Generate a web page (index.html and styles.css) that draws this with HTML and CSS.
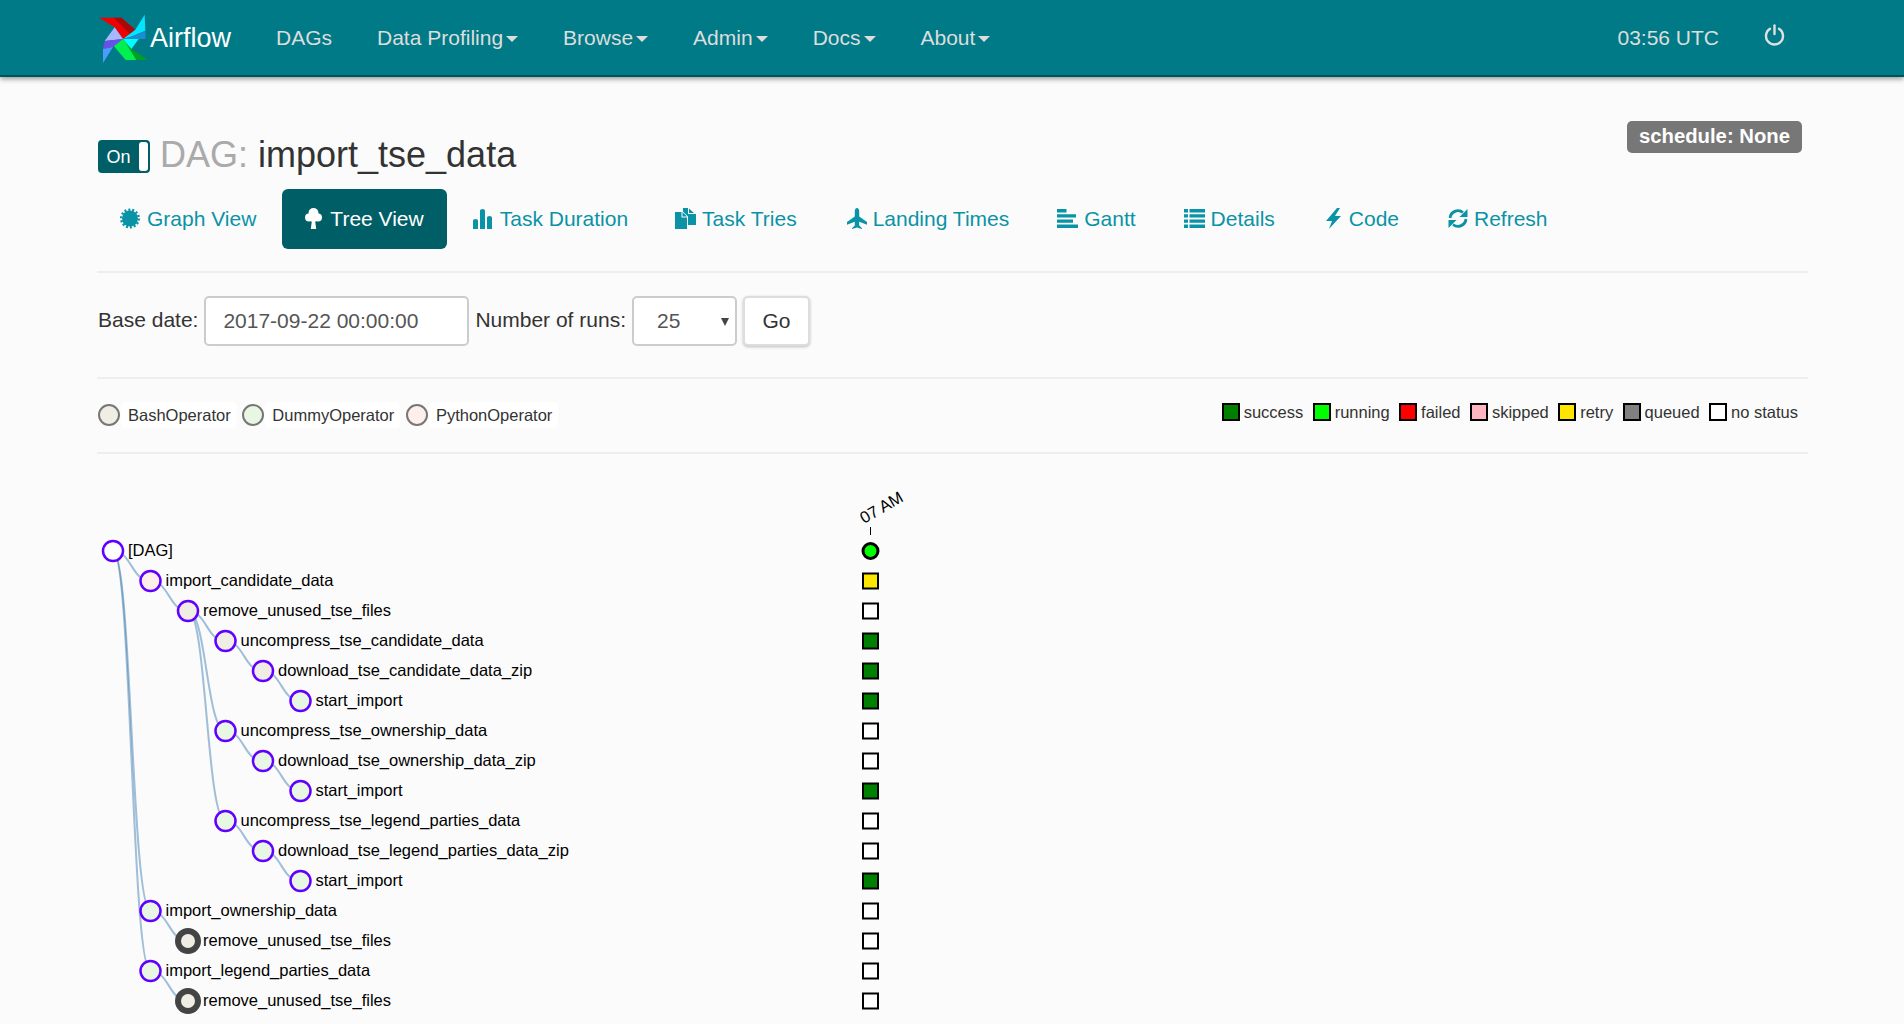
FILE: index.html
```html
<!DOCTYPE html>
<html lang="en">
<head>
<meta charset="utf-8">
<title>Airflow - import_tse_data</title>
<link rel="stylesheet" href="styles.css">
</head>
<body>
<header class="navbar">
  <a class="brand">
    <svg class="logo" viewBox="28 25 150 150" width="50" height="50">
      <polygon fill="#f00000" points="28,36 95,36 137,72 100,100 75,65"/>
      <polygon fill="#a80a0a" points="72,36 95,36 137,72 122,86"/>
      <polygon fill="#00e6ff" points="165,27 167,75 128,92 100,100 137,72"/>
      <polygon fill="#1a8fd0" points="167,75 168,100 100,100 128,92"/>
      <polygon fill="#00ffff" points="100,100 147,100 125,130"/>
      <polygon fill="#00f050" points="70,118 100,100 125,130 140,163 108,163"/>
      <polygon fill="#00a020" points="110,115 125,130 175,163 140,163"/>
      <polygon fill="#a8b8ff" points="75,65 100,100 45,106"/>
      <polygon fill="#6a50e8" points="45,106 100,100 70,124 40,130"/>
      <polygon fill="#4d9bff" points="40,172 40,130 70,124"/>
    </svg>
    <span class="brand-name">Airflow</span>
  </a>
  <nav class="nav-main">
    <a class="nav-item">DAGs</a>
    <a class="nav-item">Data Profiling<i class="caret"></i></a>
    <a class="nav-item">Browse<i class="caret"></i></a>
    <a class="nav-item">Admin<i class="caret"></i></a>
    <a class="nav-item">Docs<i class="caret"></i></a>
    <a class="nav-item">About<i class="caret"></i></a>
  </nav>
  <div class="nav-right">
    <span class="clock">03:56 UTC</span>
    <svg class="power" viewBox="0 0 21 22" width="21" height="22"><path d="M6 4.800A8.500 8.500 0 1 0 15 4.800" fill="none" stroke="#e0e0e0" stroke-width="2.400" stroke-linecap="round"/><path d="M10.500 1.400V10" stroke="#e0e0e0" stroke-width="2.400" stroke-linecap="round"/></svg>
  </div>
</header>

<main class="page">
  <div class="title-row">
    <h1 class="title">
      <span class="switch"><span class="switch-on">On</span><span class="switch-knob"></span></span>
      <span class="title-dag">DAG:</span> <span>import_tse_data</span>
    </h1>
    <span class="schedule">schedule: None</span>
  </div>

  <ul class="tabs">
    <li class="tab tab-graph"><svg class="ico ico-cert" viewBox="0 0 20 20"><circle cx="10" cy="10" r="8" fill="currentColor"/><circle cx="10" cy="10" r="8.800" fill="none" stroke="currentColor" stroke-width="2.400" stroke-dasharray="2 1.950"/></svg>Graph View</li>
    <li class="tab tab-active tab-tree"><svg class="ico ico-tree" viewBox="0 0 17 21"><circle cx="8.500" cy="5" r="5" fill="currentColor"/><circle cx="4" cy="9.500" r="4" fill="currentColor"/><circle cx="13" cy="9.500" r="4" fill="currentColor"/><circle cx="8.500" cy="10" r="4" fill="currentColor"/><path fill="currentColor" d="M7 12h3l1.200 9H5.800z"/></svg>Tree View</li>
    <li class="tab tab-duration"><svg class="ico ico-bars" viewBox="0 0 19 20"><path fill="currentColor" d="M0 11.500Q0 10 2.500 10T5 11.500V20H0zM7 1.500Q7 0 9.500 0T12 1.500V20H7zM14 8.500Q14 7 16.500 7T19 8.500V20h-5z"/></svg>Task Duration</li>
    <li class="tab tab-tries"><svg class="ico ico-tries" viewBox="0 0 21 21"><path fill="currentColor" d="M0 4h6.500v5.500H12V21H0zM7.500 4l4.500 4.500H7.500z"/><path fill="currentColor" d="M8 0h5v6h8v11h-8V8.500L8 3.500zM14 .5l5 4.500h-5z"/></svg>Task Tries</li>
    <li class="tab tab-landing"><svg class="ico ico-plane" viewBox="0 0 20 21"><path fill="currentColor" d="M10 0c1.300 0 2.200 1.500 2.200 3v5.500L20 14v2.800l-7.800-3v3.700l2.800 2.700V21l-5-1.400L5 21v-.8l2.800-2.700v-3.700L0 16.800V14l7.800-5.500V3C7.800 1.500 8.700 0 10 0z"/></svg>Landing Times</li>
    <li class="tab tab-gantt"><svg class="ico ico-gantt" viewBox="0 0 21 19"><path fill="currentColor" d="M0 0h9.500v3.400H0zM0 5.200h19v3.400H0zM0 10.400h16v3.400H0zM0 15.600h21V19H0z"/></svg>Gantt</li>
    <li class="tab tab-details"><svg class="ico ico-list" viewBox="0 0 21 19"><path fill="currentColor" d="M0 0h4v3.400H0zM5.500 0H21v3.400H5.500zM0 5.200h4v3.400H0zM5.500 5.200H21v3.400H5.500zM0 10.400h4v3.400H0zM5.500 10.400H21v3.400H5.500zM0 15.600h4V19H0zM5.500 15.600H21V19H5.500z"/></svg>Details</li>
    <li class="tab tab-code"><svg class="ico ico-code" viewBox="0 0 15 21"><polygon fill="currentColor" points="11,0 0,13 6,13 3,21 15,8 9,8 14,0"/></svg>Code</li>
    <li class="tab tab-refresh"><svg class="ico ico-refresh" viewBox="0 0 20 21"><path fill="none" stroke="currentColor" stroke-width="2.800" d="M2 10A8 8 0 0 1 15 4.500M18 11A8 8 0 0 1 5 16.500"/><path fill="currentColor" d="M19.500 1v8h-8zM.5 20v-8h8z"/></svg>Refresh</li>
  </ul>

  <hr class="rule rule-top">

  <form class="controls">
    <label class="ctl-label">Base date:</label>
    <input class="ctl-date" type="text" value="2017-09-22 00:00:00">
    <label class="ctl-label">Number of runs:</label>
    <span class="ctl-select">25<i class="ctl-arrow"></i></span>
    <button class="ctl-go" type="button">Go</button>
  </form>

  <hr class="rule rule-mid">

  <div class="legend-row">
    <div class="ops">
      <span class="op"><i class="op-dot op-bash"></i><span class="op-name">BashOperator</span></span>
      <span class="op"><i class="op-dot op-dummy"></i><span class="op-name">DummyOperator</span></span>
      <span class="op"><i class="op-dot op-python"></i><span class="op-name">PythonOperator</span></span>
    </div>
    <div class="states">
      <span class="state"><i class="box s-success"></i>success</span>
      <span class="state"><i class="box s-running"></i>running</span>
      <span class="state"><i class="box s-failed"></i>failed</span>
      <span class="state"><i class="box s-skipped"></i>skipped</span>
      <span class="state"><i class="box s-retry"></i>retry</span>
      <span class="state"><i class="box s-queued"></i>queued</span>
      <span class="state"><i class="box s-none"></i>no status</span>
    </div>
  </div>

  <hr class="rule rule-low">

  <svg class="tree" viewBox="97 454 1000 570" width="1000" height="570">
    <g class="links">
      <path d="M113 551C131.500 551 131.500 581 150.500 581"/>
      <path d="M113 551C131.500 551 131.500 911 150.500 911"/>
      <path d="M113 551C131.500 551 131.500 971 150.500 971"/>
      <path d="M150.500 581C169 581 169 611 188 611"/>
      <path d="M188 611C206.500 611 206.500 641 225.500 641"/>
      <path d="M188 611C206.500 611 206.500 731 225.500 731"/>
      <path d="M188 611C206.500 611 206.500 821 225.500 821"/>
      <path d="M225.500 641C244 641 244 671 263 671"/>
      <path d="M263 671C281.500 671 281.500 701 300.500 701"/>
      <path d="M225.500 731C244 731 244 761 263 761"/>
      <path d="M263 761C281.500 761 281.500 791 300.500 791"/>
      <path d="M225.500 821C244 821 244 851 263 851"/>
      <path d="M263 851C281.500 851 281.500 881 300.500 881"/>
      <path d="M150.500 911C169 911 169 941 188 941"/>
      <path d="M150.500 971C169 971 169 1001 188 1001"/>
    </g>
    <g class="nodes">
      <circle class="n n-dag" cx="113" cy="551" r="10"/>
      <circle class="n n-python" cx="150.500" cy="581" r="10"/>
      <circle class="n n-bash" cx="188" cy="611" r="10"/>
      <circle class="n n-bash" cx="225.500" cy="641" r="10"/>
      <circle class="n n-bash" cx="263" cy="671" r="10"/>
      <circle class="n n-dummy" cx="300.500" cy="701" r="10"/>
      <circle class="n n-dummy" cx="225.500" cy="731" r="10"/>
      <circle class="n n-dummy" cx="263" cy="761" r="10"/>
      <circle class="n n-dummy" cx="300.500" cy="791" r="10"/>
      <circle class="n n-dummy" cx="225.500" cy="821" r="10"/>
      <circle class="n n-dummy" cx="263" cy="851" r="10"/>
      <circle class="n n-dummy" cx="300.500" cy="881" r="10"/>
      <circle class="n n-dummy" cx="150.500" cy="911" r="10"/>
      <circle class="n n-leaf" cx="188" cy="941" r="10"/>
      <circle class="n n-dummy" cx="150.500" cy="971" r="10"/>
      <circle class="n n-leaf" cx="188" cy="1001" r="10"/>
    </g>
    <g class="labels">
      <text x="128" y="556">[DAG]</text>
      <text x="165.500" y="586">import_candidate_data</text>
      <text x="203" y="616">remove_unused_tse_files</text>
      <text x="240.500" y="646">uncompress_tse_candidate_data</text>
      <text x="278" y="676">download_tse_candidate_data_zip</text>
      <text x="315.500" y="706">start_import</text>
      <text x="240.500" y="736">uncompress_tse_ownership_data</text>
      <text x="278" y="766">download_tse_ownership_data_zip</text>
      <text x="315.500" y="796">start_import</text>
      <text x="240.500" y="826">uncompress_tse_legend_parties_data</text>
      <text x="278" y="856">download_tse_legend_parties_data_zip</text>
      <text x="315.500" y="886">start_import</text>
      <text x="165.500" y="916">import_ownership_data</text>
      <text x="203" y="946">remove_unused_tse_files</text>
      <text x="165.500" y="976">import_legend_parties_data</text>
      <text x="203" y="1006">remove_unused_tse_files</text>
    </g>
    <g class="grid">
      <text class="tick-label" transform="translate(864 524) rotate(-30)">07 AM</text>
      <line class="tick" x1="870.500" y1="527" x2="870.500" y2="535"/>
      <circle class="st st-running" cx="870.500" cy="551" r="7.500"/>
      <rect class="st st-retry" x="863" y="573.500" width="15" height="15"/>
      <rect class="st st-none" x="863" y="603.500" width="15" height="15"/>
      <rect class="st st-success" x="863" y="633.500" width="15" height="15"/>
      <rect class="st st-success" x="863" y="663.500" width="15" height="15"/>
      <rect class="st st-success" x="863" y="693.500" width="15" height="15"/>
      <rect class="st st-none" x="863" y="723.500" width="15" height="15"/>
      <rect class="st st-none" x="863" y="753.500" width="15" height="15"/>
      <rect class="st st-success" x="863" y="783.500" width="15" height="15"/>
      <rect class="st st-none" x="863" y="813.500" width="15" height="15"/>
      <rect class="st st-none" x="863" y="843.500" width="15" height="15"/>
      <rect class="st st-success" x="863" y="873.500" width="15" height="15"/>
      <rect class="st st-none" x="863" y="903.500" width="15" height="15"/>
      <rect class="st st-none" x="863" y="933.500" width="15" height="15"/>
      <rect class="st st-none" x="863" y="963.500" width="15" height="15"/>
      <rect class="st st-none" x="863" y="993.500" width="15" height="15"/>
    </g>
  </svg>
</main>
</body>
</html>
```

FILE: styles.css
```css
* { box-sizing: border-box; }
html, body { margin: 0; height: 1024px; overflow: hidden; }
body { background: #fbfbfb; color: #333; font-family: "Liberation Sans", Arial, sans-serif; font-size: 21px; }

.navbar { display: flex; align-items: center; height: 77px; padding: 0 119px 0 99px; background: #007a87; border-bottom: 2px solid #00535b; box-shadow: 0 2px 5px rgba(0,0,0,.4); color: #ddd; position: relative; }
.brand { display: flex; align-items: center; gap: 1px; color: #fff; font-size: 27px; width: 154.500px; flex: none; }
.brand-name { padding-top: 2px; }
.logo { display: block; flex: none; margin-top: 2px; }
.nav-main { display: flex; }
.nav-item { padding: 0 22.500px; display: flex; align-items: center; }
.caret { display: inline-block; width: 0; height: 0; margin-left: 3px; margin-top: 2px; border-left: 6px solid transparent; border-right: 6px solid transparent; border-top: 6px solid #ddd; }
.nav-right { margin-left: auto; display: flex; align-items: center; gap: 45px; }
.power { display: block; margin-top: -5px; }

.page { padding: 0 96px 0 97px; }
.title-row { display: flex; justify-content: space-between; align-items: flex-start; padding-top: 44px; height: 110px; padding-right: 7px; }
.title { margin: 0 0 0 1px; font-weight: 400; font-size: 36px; line-height: 40px; color: #333; display: flex; align-items: center; gap: 10px; padding-top: 14px; }
.title-dag { color: #aaa; }
.switch { display: flex; width: 52px; height: 33px; border-radius: 4px; background: #005f66; border: 2px solid #005f66; font-size: 18px; color: #fff; margin-top: 3px; }
.switch-on { flex: 1; display: flex; align-items: center; justify-content: center; padding-right: 2px; }
.switch-knob { width: 9px; background: #fff; border-radius: 3px; }
.schedule { background: #777; color: #fff; font-weight: 700; font-size: 20.300px; line-height: 31px; height: 32px; padding: 0 12px; margin-right: -1px; border-radius: 5px; }

.tabs { list-style: none; margin: 2px 0 0; padding: 0; display: flex; height: 60px; color: #0a93a6; }
.tab { display: flex; align-items: center; padding: 0 24px; height: 60px; white-space: nowrap; }
.tab-graph { padding-left: 23px; padding-right: 26px; }
.tab-active { background: #005f66; color: #fff; border-radius: 6px; padding: 0 23px; }
.tab-duration { padding-left: 26px; padding-right: 23px; }
.tab-tries { padding-right: 26px; }
.tab-details { padding-right: 27px; }
.tab-code { padding-right: 25px; }
.ico { display: block; flex: none; height: 21px; margin-top: -2px; margin-right: 6px; }
.ico-cert { width: 20px; margin-right: 7px; }
.ico-tree { width: 17px; margin-right: 8px; }
.ico-bars { width: 19px; height: 20px; margin-right: 8px; margin-top: -1px; }
.ico-tries { width: 21px; }
.ico-plane { width: 20px; }
.ico-gantt { width: 21px; height: 19px; margin-top: -1px; margin-right: 6px; }
.ico-list { width: 21px; height: 19px; margin-top: -1px; margin-right: 6px; }
.ico-code { width: 15px; margin-right: 8px; }
.ico-refresh { width: 20px; margin-right: 6px; }

.rule { border: 0; border-top: 2px solid #eee; margin: 0; }
.rule-top { margin-top: 22px; }

.controls { display: flex; align-items: center; height: 104px; gap: 6px; padding: 0 0 8px 1px; }
.ctl-label { color: #333; margin-top: -2px; }
.ctl-date { width: 265px; height: 50px; font: inherit; color: #555; border: 2px solid #ccc; border-radius: 5px; background: #fff; padding: 0 17px; }
.ctl-select { position: relative; width: 105px; height: 50px; border: 2px solid #ccc; border-radius: 5px; background: #fff; color: #555; padding: 0 23px; line-height: 46px; }
.ctl-arrow { position: absolute; right: 6px; top: 20px; width: 0; height: 0; border-left: 4.500px solid transparent; border-right: 4.500px solid transparent; border-top: 8px solid #444; }
.ctl-go { width: 67px; height: 50px; font: inherit; color: #333; background: #fff; border: 2px solid #ddd; border-radius: 5px; box-shadow: 0 1px 3px rgba(0,0,0,.25); }

.legend-row { display: flex; justify-content: space-between; height: 73px; padding-right: 10px; font-size: 16.500px; }
.ops { display: flex; padding: 23px 0 0 1px; align-items: flex-start; }
.op { display: flex; align-items: center; margin-right: 5.600px; }
.op-dot { width: 22px; height: 22px; border-radius: 50%; border: 2px solid #777; margin-right: 1px; }
.op-name { background: #fff; border-radius: 5px; padding: 0 6px 0 7px; line-height: 26px; color: #333; }
.op-bash { background: #f0ede4; }
.op-dummy { background: #e8f7e4; }
.op-python { background: #ffefeb; }
.states { display: flex; gap: 9.400px; padding-top: 24px; align-items: flex-start; color: #333; }
.state { display: flex; align-items: center; line-height: 18px; }
.box { width: 18px; height: 18px; border: 2px solid #000; margin-right: 4px; display: block; }
.s-success { background: #008000; }
.s-running { background: #0f0; }
.s-failed { background: #f00; }
.s-skipped { background: #ffb6c1; }
.s-retry { background: #ffe600; }
.s-queued { background: #808080; }
.s-none { background: #fff; }

.tree { display: block; }
.links path { fill: none; stroke: steelblue; stroke-opacity: .5; stroke-width: 2; }
.n { stroke: #6200ff; stroke-width: 2.500; }
.n-dag { fill: #fff; }
.n-python { fill: #ffefeb; }
.n-bash { fill: #f0ede4; }
.n-dummy { fill: #e8f7e4; }
.n-leaf { fill: #f0ede4; stroke: #444; stroke-width: 6; }
.labels text { font-size: 16.500px; fill: #000; font-family: "Liberation Sans", Arial, sans-serif; }
.tick-label { font-size: 16.500px; fill: #000; font-family: "Liberation Sans", Arial, sans-serif; }
.tick { stroke: #000; stroke-width: 1; }
.st { stroke: #000; stroke-width: 2; }
.st-running { fill: #0f0; stroke-width: 3; }
.st-retry { fill: #ffe600; }
.st-none { fill: #fff; }
.st-success { fill: #008000; }
```
